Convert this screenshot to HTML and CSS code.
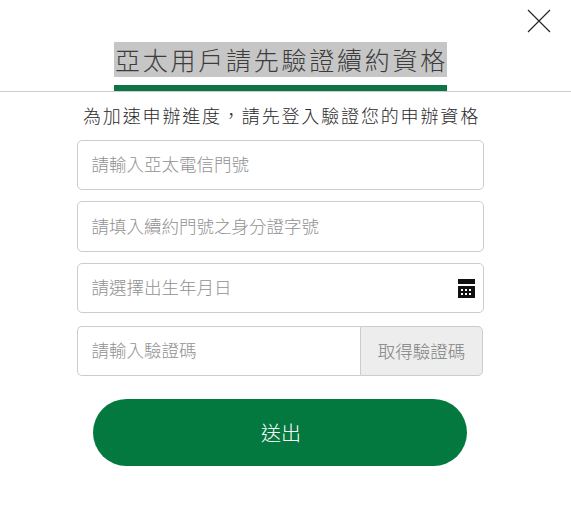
FILE: index.html
```html
<!DOCTYPE html>
<html lang="zh-Hant">

<head>
    <meta charset="UTF-8">
    <meta name="viewport" content="width=device-width, initial-scale=1.0">
    <title>亞太用戶請先驗證續約資格</title>
    <link rel="stylesheet" href="styles.css">
</head>

<body>
    <div class="modal">
        <div class="close-row">
            <svg class="close" viewBox="0 0 24 24" fill="none" stroke="#222" stroke-width="1.1">
                <path d="M1 1l22 22M23 1L1 23" />
            </svg>
        </div>
        <div class="head">
            <h2 class="title"><span class="selected">亞太用戶請先驗證續約資格</span></h2>
        </div>
        <p class="sub">為加速申辦進度，請先登入驗證您的申辦資格</p>
        <form class="form">
            <input class="field" type="text" placeholder="請輸入亞太電信門號">
            <input class="field" type="text" placeholder="請填入續約門號之身分證字號">
            <div class="date-wrap">
                <input class="field" type="text" placeholder="請選擇出生年月日">
                <svg class="cal" viewBox="0 0 17 19">
                    <rect x="0" y="0" width="17" height="5" fill="#111" />
                    <rect x="0" y="7" width="17" height="12" fill="#111" />
                    <g fill="#fff">
                        <rect x="3" y="10" width="2" height="2" />
                        <rect x="7" y="10" width="2" height="2" />
                        <rect x="11" y="10" width="2" height="2" />
                        <rect x="3" y="14" width="2" height="2" />
                        <rect x="7" y="14" width="2" height="2" />
                        <rect x="11" y="14" width="2" height="2" />
                    </g>
                </svg>
            </div>
            <div class="code-row">
                <input class="field code" type="text" placeholder="請輸入驗證碼">
                <div class="get-code">取得驗證碼</div>
            </div>
            <button class="submit" type="button">送出</button>
        </form>
    </div>
</body>

</html>
```

FILE: styles.css
```css
body {
    margin: 0;
    background-color: white;
    font-family: "Noto Sans CJK TC", "Liberation Sans", sans-serif;
}

.modal {
    width: 571px;
    height: 506px;
    overflow: hidden;
}

.close-row {
    display: flex;
    justify-content: flex-end;
    height: 42px;
    padding-right: 20px;
    padding-top: 9px;
    box-sizing: border-box;
}

.close {
    width: 24px;
    height: 24px;
}

.head {
    border-bottom: 1px solid #ccc;
    height: 49px;
    padding-left: 114px;
}

.title {
    margin: 0;
    width: 333px;
    height: 49px;
    box-sizing: border-box;
    border-bottom: 6px solid #0f7445;
    font-size: 25px;
    font-weight: 300;
    letter-spacing: 2.75px;
    line-height: 35px;
    color: #3c3c3c;
    white-space: nowrap;
}

.selected {
    display: block;
    background-color: #c6c6c6;
    height: 35px;
    padding-left: 1px;
}

.sub {
    margin: 10px 0 0;
    width: 563px;
    text-align: center;
    font-size: 18px;
    font-weight: 300;
    letter-spacing: 1.85px;
    line-height: 26px;
    color: #2a2a2a;
}

.form {
    width: 407px;
    margin: 12px 0 0 77px;
    display: flex;
    flex-direction: column;
    gap: 11px;
}

.field {
    display: block;
    width: 100%;
    height: 50.4px;
    box-sizing: border-box;
    border: 1px solid #ccc;
    border-radius: 5px;
    padding: 0 14px 3px 13.5px;
    font-family: inherit;
    font-size: 17.5px;
    font-weight: 300;
    color: #333;
    outline: none;
}

.field::placeholder {
    color: #919191;
    opacity: 1;
}

.date-wrap {
    position: relative;
}

.cal {
    position: absolute;
    right: 9px;
    top: 16px;
    width: 17px;
    height: 19px;
}

.code-row {
    display: flex;
    height: 50px;
    margin-top: 2px;
}

.code {
    flex: 1;
    width: auto;
    height: 50px;
    min-width: 0;
    border-radius: 5px 0 0 5px;
    border-right: 0;
}

.get-code {
    width: 123px;
    margin-right: 1px;
    padding-bottom: 1px;
    box-sizing: border-box;
    border: 1px solid #ccc;
    border-radius: 0 5px 5px 0;
    background-color: #ededed;
    color: #808080;
    font-size: 17.5px;
    font-weight: 300;
    display: flex;
    align-items: center;
    justify-content: center;
}

.submit {
    width: 374px;
    height: 67px;
    margin: 12px 0 0 16px;
    padding: 0 0 1px 2px;
    border: 0;
    border-radius: 34px;
    background-color: #03793f;
    color: white;
    font-family: inherit;
    font-size: 20px;
    font-weight: 300;
}
```
